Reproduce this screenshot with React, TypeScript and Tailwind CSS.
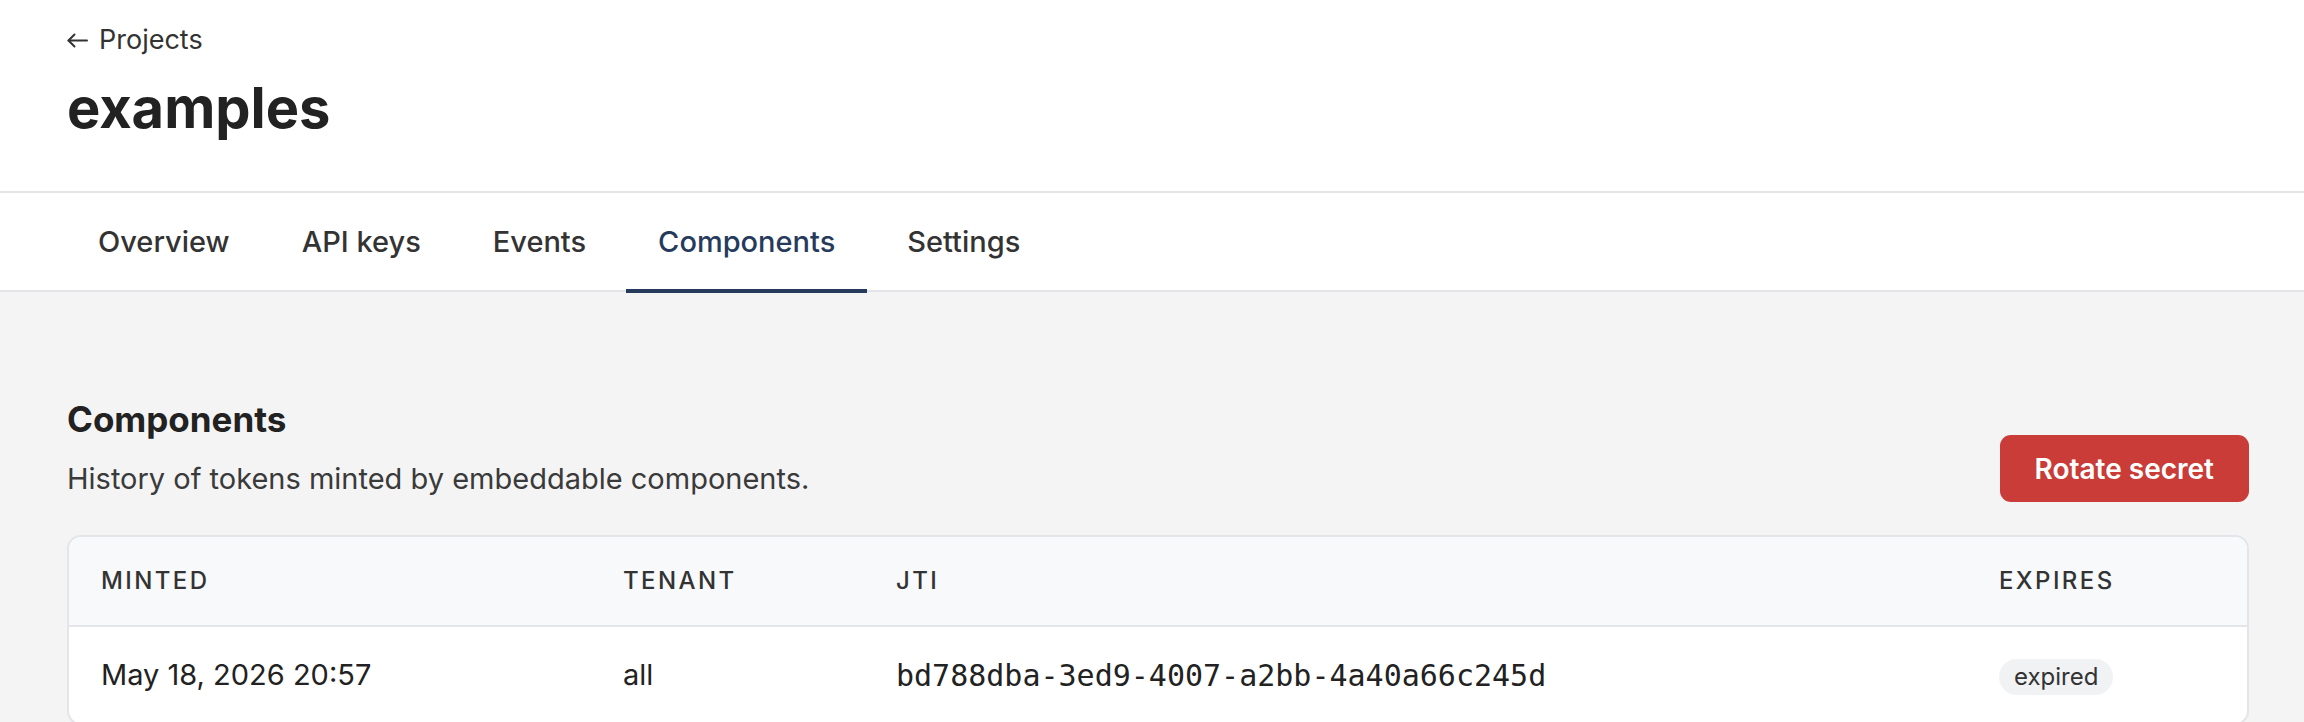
import React from "react";

const tabs = ["Overview", "API keys", "Events", "Components", "Settings"];

const rows = [
  {
    minted: "May 18, 2026 20:57",
    tenant: "all",
    jti: "bd788dba-3ed9-4007-a2bb-4a40a66c245d",
    expires: "expired",
  },
];

const BackArrow = () => (
  <svg width="21" height="15" viewBox="0 0 21 15" fill="none" stroke="currentColor" strokeWidth="2" strokeLinecap="round" strokeLinejoin="round">
    <path d="M20 7.5H1.5" />
    <path d="M7.5 1.5L1.5 7.5L7.5 13.5" />
  </svg>
);

const App = () => {
  return (
    <div className="min-h-screen bg-[#f4f4f5] font-['Inter',sans-serif]">
      <header className="bg-white px-[67px] pt-[22px] pb-[49px]">
        <a href="#" className="flex items-center gap-[11px] text-[27px] leading-[36px] text-[#333]">
          <BackArrow />
          Projects
        </a>
        <h1 className="mt-[17px] text-[56px] leading-[67px] font-bold text-[#222]">examples</h1>
      </header>

      <nav className="bg-white border-y-2 border-[#e4e5e9] px-[66px]">
        <div className="flex gap-[8px]">
          {tabs.map((tab) => {
            const active = tab === "Components";
            return (
              <button
                key={tab}
                className={
                  active
                    ? "relative h-[97px] px-[32px] flex items-center text-[29px] font-medium text-[#263b5c]"
                    : "relative h-[97px] px-[32px] flex items-center text-[29px] font-medium text-[#333]"
                }
              >
                {tab}
                {active && <span className="absolute left-0 right-0 -bottom-[3px] h-[4px] bg-[#263a5c]"></span>}
              </button>
            );
          })}
        </div>
      </nav>

      <main className="pl-[67px] pr-[55px] pt-[105px]">
        <div className="flex items-end justify-between">
          <div>
            <h2 className="text-[35px] leading-[44px] font-bold text-[#222]">Components</h2>
            <p className="mt-[15px] text-[29px] leading-[46px] text-[#3a3a3a]">
              History of tokens minted by embeddable components.
            </p>
          </div>
          <button className="h-[67px] px-[35px] rounded-[11px] bg-[#c93c37] text-white text-[28px] font-semibold">
            Rotate secret
          </button>
        </div>

        <div className="mt-[33px] bg-white border-2 border-[#e4e5e9] rounded-[14px] overflow-hidden">
          <div className="grid grid-cols-[522px_273px_1fr_280px] h-[90px] items-center bg-[#f8f9fb] border-b-2 border-[#e4e5e9] text-[24px] font-medium tracking-[0.1em] text-[#333]">
            <div className="px-[32px]">MINTED</div>
            <div className="px-[32px]">TENANT</div>
            <div className="px-[32px]">JTI</div>
            <div className="px-[32px]">EXPIRES</div>
          </div>
          {rows.map((r) => (
            <div key={r.jti} className="grid grid-cols-[522px_273px_1fr_280px] h-[96px] items-center text-[29px] text-[#222]">
              <div className="px-[32px]">{r.minted}</div>
              <div className="px-[32px]">{r.tenant}</div>
              <div className="px-[32px] font-['DejaVu_Sans_Mono',monospace] text-[30px]">{r.jti}</div>
              <div className="px-[32px]">
                <span className="inline-flex items-center h-[36px] px-[15px] rounded-full bg-[#f1f2f4] text-[24px] text-[#333]">
                  {r.expires}
                </span>
              </div>
            </div>
          ))}
        </div>
      </main>
    </div>
  );
};

export default App;
